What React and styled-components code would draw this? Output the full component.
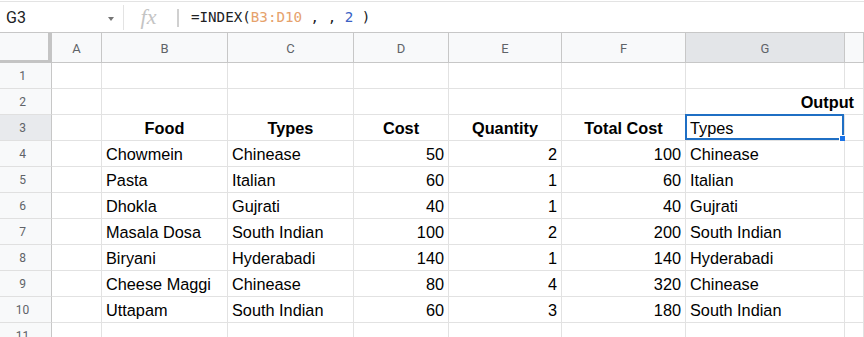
import React from 'react';
import styled, { createGlobalStyle } from 'styled-components';

const GlobalStyle = createGlobalStyle`
  html, body {
    margin: 0;
    padding: 0;
    background: #fff;
    overflow: hidden;
  }
  body {
    font-family: 'Liberation Sans', Arial, sans-serif;
  }
`;

const Page = styled.div`
  width: 864px;
  height: 337px;
  padding-top: 1px;
  box-sizing: border-box;
  overflow: hidden;
  background: #fff;
`;

const FormulaBar = styled.div`
  display: flex;
  align-items: stretch;
  height: 31px;
  border-top: 1px solid #e3e3e3;
  box-sizing: border-box;
`;

const NameBox = styled.div`
  width: 124px;
  display: flex;
  align-items: center;
  justify-content: space-between;
  padding: 0 9px 0 6px;
  box-sizing: border-box;
  border-right: 1px solid #e3e3e3;
  margin: 3px 0 2px;
  font-family: Roboto, 'Liberation Sans', sans-serif;
  font-size: 16px;
  color: #202124;
`;

const Caret = styled.span`
  width: 0;
  height: 0;
  border-left: 3.5px solid transparent;
  border-right: 3.5px solid transparent;
  border-top: 4px solid #757575;
  margin-top: 3px;
`;

const FxBox = styled.div`
  width: 53px;
  display: flex;
  align-items: center;
  justify-content: center;
  font-family: 'Liberation Serif', 'DejaVu Serif', serif;
  font-style: italic;
  font-size: 22px;
  color: #c4c4c4;
  padding-right: 4px;
  box-sizing: border-box;
`;

const Divider = styled.div`
  width: 2px;
  background: #d0d0d0;
  margin: 7px 0 5px;
`;

const Formula = styled.div`
  display: flex;
  align-items: center;
  padding-left: 12px;
  font-family: 'DejaVu Sans Mono', 'Liberation Mono', monospace;
  font-size: 14.2px;
  color: #202124;
  white-space: pre;
`;

const Token = styled.span`
  color: ${(p) => p.$color};
`;

const Grid = styled.div`
  display: grid;
  grid-template-columns: 52px 50px 126px 126px 95px 113px 124px 159px 1fr;
  grid-template-rows: 30px;
  grid-auto-rows: 26px;
  border-top: 1px solid #c7c7c7;
`;

const Corner = styled.div`
  background: #f8f9fa;
  border-right: 4px solid #c4c4c4;
  border-bottom: 3px solid #c4c4c4;
  box-sizing: border-box;
`;

const ColHead = styled.div`
  display: flex;
  align-items: center;
  justify-content: center;
  background: ${(p) => (p.$active ? '#e3e5e8' : '#f8f9fa')};
  border-right: 1px solid #c7c7c7;
  border-bottom: 1px solid #c7c7c7;
  box-sizing: border-box;
  font-family: Roboto, 'Liberation Sans', sans-serif;
  font-size: 13px;
  color: #5f6368;
  padding-top: 1px;
`;

const RowHead = styled.div`
  display: flex;
  align-items: center;
  justify-content: center;
  padding-right: 6px;
  background: ${(p) => (p.$active ? '#e8eaed' : '#f8f9fa')};
  border-right: 1px solid #c7c7c7;
  border-bottom: 1px solid #e0e0e0;
  box-sizing: border-box;
  font-family: Roboto, 'Liberation Sans', sans-serif;
  font-size: 12px;
  color: #5f6368;
`;

const Cell = styled.div`
  position: relative;
  display: flex;
  align-items: flex-end;
  justify-content: ${(p) =>
    p.$align === 'right' ? 'flex-end' : p.$align === 'center' ? 'center' : 'flex-start'};
  grid-column: ${(p) => (p.$span ? `span ${p.$span}` : 'auto')};
  padding: 0 4px 2px;
  border-right: 1px solid #e2e2e2;
  border-bottom: 1px solid #e2e2e2;
  box-sizing: border-box;
  font-size: 16.3px;
  font-weight: ${(p) => (p.$bold ? 700 : 400)};
  color: #000;
  white-space: nowrap;
  overflow: visible;
  padding-right: ${(p) => (p.$padRight ? `${p.$padRight}px` : '4px')};
`;

const Selection = styled.div`
  position: absolute;
  left: -1px;
  top: -1px;
  right: 0;
  bottom: 0;
  border: 2px solid #1f6fc4;
  pointer-events: none;
`;

const Handle = styled.div`
  position: absolute;
  right: -4px;
  bottom: -4px;
  width: 7px;
  height: 7px;
  background: #1a73e8;
  border: 1px solid #fff;
  box-sizing: border-box;
`;

const columns = ['A', 'B', 'C', 'D', 'E', 'F', 'G', ''];

const rows = [
  ['Chowmein', 'Chinease', 50, 2, 100, 'Chinease'],
  ['Pasta', 'Italian', 60, 1, 60, 'Italian'],
  ['Dhokla', 'Gujrati', 40, 1, 40, 'Gujrati'],
  ['Masala Dosa', 'South Indian', 100, 2, 200, 'South Indian'],
  ['Biryani', 'Hyderabadi', 140, 1, 140, 'Hyderabadi'],
  ['Cheese Maggi', 'Chinease', 80, 4, 320, 'Chinease'],
  ['Uttapam', 'South Indian', 60, 3, 180, 'South Indian'],
];

const EmptyRow = ({ n }) => (
  <>
    <RowHead>{n}</RowHead>
    {columns.map((c, i) => (
      <Cell key={i} />
    ))}
  </>
);

export default function App() {
  return (
    <Page>
      <GlobalStyle />
      <FormulaBar>
        <NameBox>
          G3
          <Caret />
        </NameBox>
        <FxBox>fx</FxBox>
        <Divider />
        <Formula>
          =INDEX(<Token $color="#e6a26c">B3:D10</Token> , , <Token $color="#3b62c4">2</Token> )
        </Formula>
      </FormulaBar>
      <Grid>
        <Corner />
        {columns.map((c, i) => (
          <ColHead key={i} $active={c === 'G'}>
            {c}
          </ColHead>
        ))}

        <EmptyRow n={1} />

        <RowHead>2</RowHead>
        <Cell />
        <Cell />
        <Cell />
        <Cell />
        <Cell />
        <Cell />
        <Cell $span={2} $align="right" $bold $padRight={9}>
          Output
        </Cell>

        <RowHead $active>3</RowHead>
        <Cell />
        <Cell $align="center" $bold>Food</Cell>
        <Cell $align="center" $bold>Types</Cell>
        <Cell $align="center" $bold>Cost</Cell>
        <Cell $align="center" $bold>Quantity</Cell>
        <Cell $align="center" $bold>Total Cost</Cell>
        <Cell>
          Types
          <Selection>
            <Handle />
          </Selection>
        </Cell>
        <Cell />

        {rows.map((r, i) => (
          <React.Fragment key={i}>
            <RowHead>{i + 4}</RowHead>
            <Cell />
            <Cell>{r[0]}</Cell>
            <Cell>{r[1]}</Cell>
            <Cell $align="right">{r[2]}</Cell>
            <Cell $align="right">{r[3]}</Cell>
            <Cell $align="right">{r[4]}</Cell>
            <Cell>{r[5]}</Cell>
            <Cell />
          </React.Fragment>
        ))}

        <EmptyRow n={11} />
      </Grid>
    </Page>
  );
}
